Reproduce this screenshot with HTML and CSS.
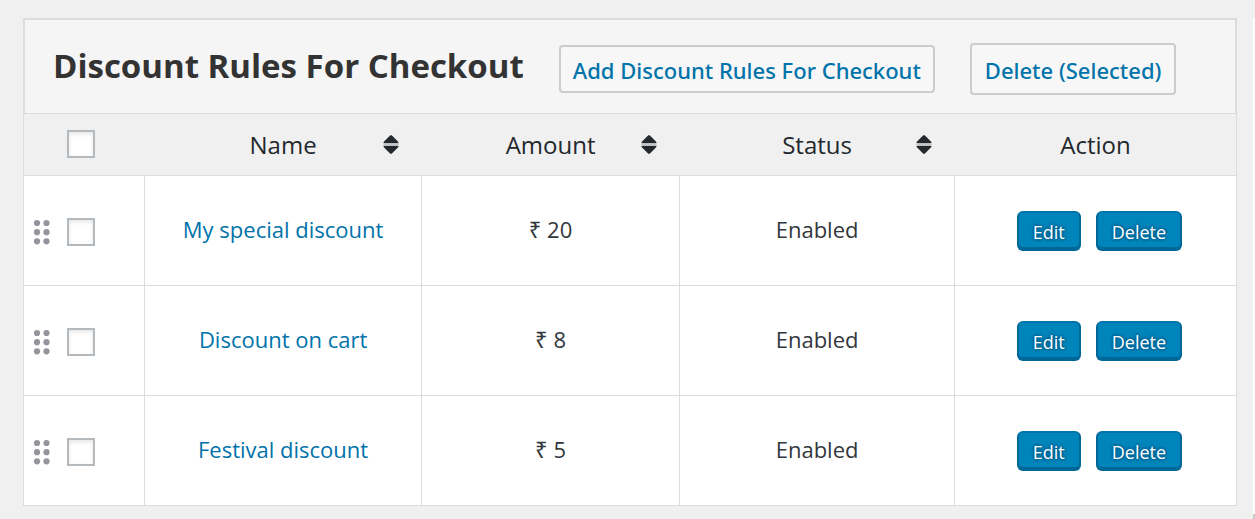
FILE: index.html
```html
<!DOCTYPE html>
<html lang="en">
<head>
<meta charset="utf-8">
<title>Discount Rules For Checkout</title>
<link rel="stylesheet" href="styles.css">
</head>
<body>
<svg class="sprite" aria-hidden="true">
  <symbol id="sort" viewBox="0 0 16 20"><path d="M8 0 9.2 0.8 15.4 7V8.2H0.6V7L6.8 0.8ZM8 19 9.2 18.2 15.4 12V10.8H0.6V12L6.8 18.2Z" fill="#23282d"/><path d="M0.4 9.5H15.6" stroke="#b9bbbc" stroke-width="0.8"/></symbol>
  <symbol id="grip" viewBox="0 0 18 26"><g fill="#94949c"><circle cx="4" cy="4" r="3.1"/><circle cx="13.5" cy="4" r="3.1"/><circle cx="4" cy="13.2" r="3.1"/><circle cx="13.5" cy="13.2" r="3.1"/><circle cx="4" cy="22.3" r="3.1"/><circle cx="13.5" cy="22.3" r="3.1"/></g></symbol>
</svg>
<main class="content">
  <header class="toolbar">
    <h1 class="title">Discount Rules For Checkout</h1>
    <button class="tool tool-add" type="button">Add Discount Rules For Checkout</button>
    <button class="tool tool-delete" type="button">Delete (Selected)</button>
  </header>
  <table class="rules">
    <colgroup><col class="col-check"><col class="col-name"><col class="col-amount"><col class="col-status"><col class="col-action"></colgroup>
    <thead>
      <tr>
        <th scope="col"><div class="select"><input class="check" type="checkbox" aria-label="Select all rules"></div></th>
        <th scope="col"><div class="heading"><span class="label">Name</span><button class="sort" type="button" aria-label="Sort by name"><svg class="sort-icon"><use href="#sort"/></svg></button></div></th>
        <th scope="col"><div class="heading"><span class="label">Amount</span><button class="sort" type="button" aria-label="Sort by amount"><svg class="sort-icon"><use href="#sort"/></svg></button></div></th>
        <th scope="col"><div class="heading"><span class="label">Status</span><button class="sort" type="button" aria-label="Sort by status"><svg class="sort-icon"><use href="#sort"/></svg></button></div></th>
        <th scope="col">Action</th>
      </tr>
    </thead>
    <tbody>
      <tr>
        <td class="controls"><div class="select"><svg class="grip"><use href="#grip"/></svg><input class="check" type="checkbox" aria-label="Select My special discount"></div></td>
        <td><a class="rule" href="#">My special discount</a></td>
        <td>₹ 20</td>
        <td>Enabled</td>
        <td class="controls"><div class="actions"><button class="primary" type="button">Edit</button><button class="primary" type="button">Delete</button></div></td>
      </tr>
      <tr>
        <td class="controls"><div class="select"><svg class="grip"><use href="#grip"/></svg><input class="check" type="checkbox" aria-label="Select Discount on cart"></div></td>
        <td><a class="rule" href="#">Discount on cart</a></td>
        <td>₹ 8</td>
        <td>Enabled</td>
        <td class="controls"><div class="actions"><button class="primary" type="button">Edit</button><button class="primary" type="button">Delete</button></div></td>
      </tr>
      <tr>
        <td class="controls"><div class="select"><svg class="grip"><use href="#grip"/></svg><input class="check" type="checkbox" aria-label="Select Festival discount"></div></td>
        <td><a class="rule" href="#">Festival discount</a></td>
        <td>₹ 5</td>
        <td>Enabled</td>
        <td class="controls"><div class="actions"><button class="primary" type="button">Edit</button><button class="primary" type="button">Delete</button></div></td>
      </tr>
    </tbody>
  </table>
</main>
<div class="side"></div>
</body>
</html>
```
FILE: styles.css
```css
* {
  box-sizing: border-box;
}

body {
  margin: 0;
  min-height: 100vh;
  display: flex;
  background: #f0f0f0;
  color: #32373c;
  font: 22px/32px "Open Sans", "Noto Sans", sans-serif;
}

button {
  font-family: inherit;
  cursor: pointer;
}

.sprite {
  position: absolute;
  width: 0;
  height: 0;
}

.content {
  flex: 1;
  padding: 18px 16px 8px 23px;
}

.side {
  width: 2px;
  margin-top: 18px;
  background: #fff;
  border-bottom: 5px solid #c8c8c8;
}

.toolbar {
  display: flex;
  align-items: center;
  gap: 35px;
  padding: 23px 28px 18px;
  background: #f5f5f5;
  border: 2px solid #dcdcdc;
  border-bottom: 0;
}

.title {
  margin: 0;
  padding-bottom: 6px;
  color: #333;
  font-size: 33px;
  font-weight: 700;
  line-height: 40px;
  white-space: nowrap;
}

.tool {
  padding: 7px 12px 5px;
  background: #f7f7f7;
  border: 2px solid #ccc;
  border-radius: 4px;
  color: #0073aa;
  font-family: "Noto Sans", "Open Sans", sans-serif;
  font-size: 22px;
  font-weight: 500;
  line-height: 32px;
  white-space: nowrap;
}

.tool-delete {
  padding: 9px 13px 7px;
}

.rules {
  width: 100%;
  table-layout: fixed;
  border-collapse: separate;
  border-spacing: 0;
  border: solid #dcdcdc;
  border-width: 1px 0 0 1px;
  background: #fff;
}

.col-check { width: 10%; }
.col-name { width: 22.8%; }
.col-amount { width: 21.3%; }
.col-status { width: 22.65%; }

.rules th,
.rules td {
  padding: 0;
  text-align: center;
  border-bottom: 1px solid #dcdcdc;
}

.rules th {
  height: 62px;
  background: #f0f0f0;
  color: #23282d;
  font-size: 24px;
  font-weight: 500;
}

.rules td {
  height: 110px;
  padding-bottom: 4px;
  border-right: 1px solid #dcdcdc;
}

.rules .controls {
  padding: 2px 0 0;
}

.rules th:last-child {
  border-right: 1px solid #dcdcdc;
}

.heading {
  display: grid;
  grid-template-columns: 1fr auto 1fr;
  align-items: center;
  padding: 0 23px 0 22px;
}

.label {
  grid-column: 2;
}

.sort {
  justify-self: end;
  display: block;
  padding: 0;
  border: 0;
  background: none;
}

.sort-icon {
  display: block;
  width: 16px;
  height: 20px;
}

.select {
  display: flex;
  align-items: center;
  justify-content: flex-end;
  gap: 16px;
  padding-right: 49px;
}

.grip {
  width: 18px;
  height: 26px;
}

.check {
  appearance: none;
  width: 28px;
  height: 28px;
  margin: 0;
  background: #fff;
  border: 2px solid #b4b9be;
  box-shadow: inset 0 2px 4px rgba(0, 0, 0, 0.1);
}

th .select {
  padding: 0 50px 2px 0;
}

.rule {
  color: #0073aa;
  text-decoration: none;
}

.actions {
  display: flex;
  justify-content: center;
  gap: 15px;
  padding: 0 0 2px 8px;
}

.primary {
  padding: 6px 14px 4px;
  background: #0085ba;
  border: 2px solid #006799;
  border-color: #0073aa #006799 #006799;
  border-radius: 6px;
  box-shadow: inset 0 -2px 0 #006799;
  color: #fff;
  font-size: 18px;
  line-height: 26px;
  text-shadow: 0 -2px 2px #006799, 2px 0 2px #006799, 0 2px 2px #006799, -2px 0 2px #006799;
}
```
